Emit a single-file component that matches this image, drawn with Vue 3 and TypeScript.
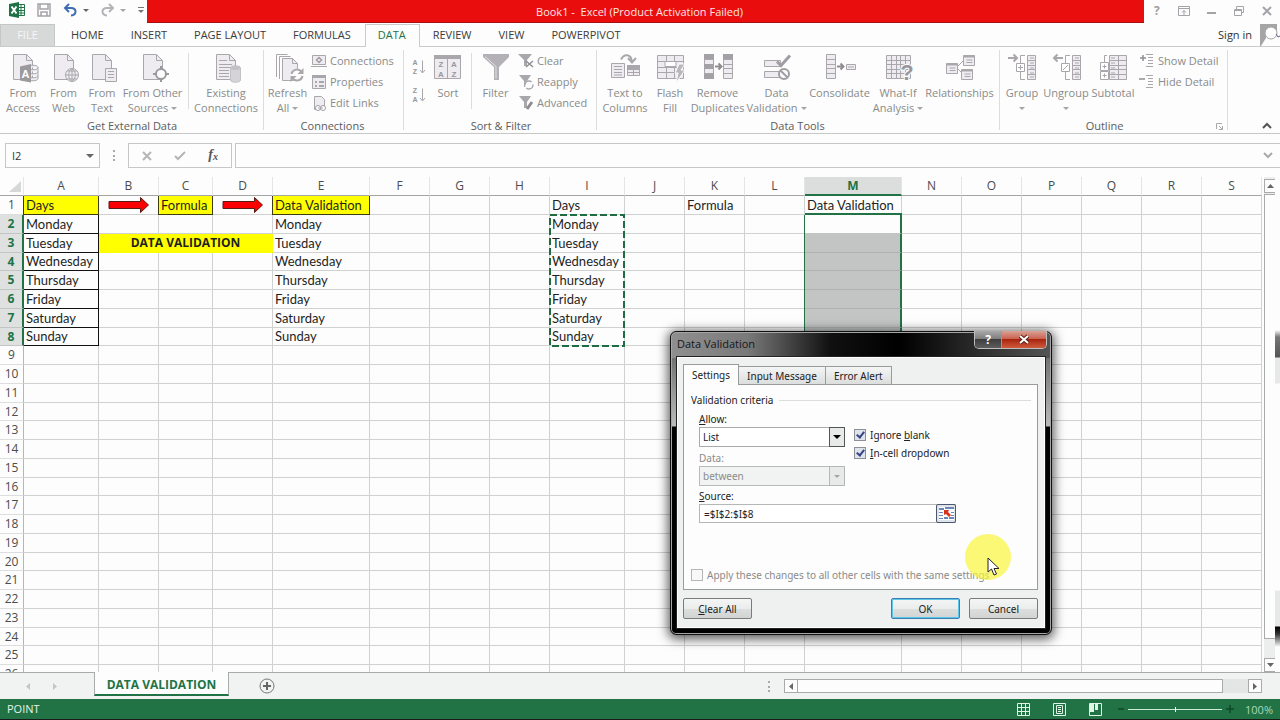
<script setup lang="ts">
import { ref } from 'vue'

interface Tool { label: string[]; icon: string; width: number; drop?: boolean; ruleBefore?: boolean }

const S = 'fill="#efecf1" stroke="#a9a7ac"'
const N = 'fill="none" stroke="#a9a7ac"'
const doc = `<path ${S} d="M5.500 1.500h13l6 6v19h-19z"/><path ${N} d="M18.500 1.500v6h6"/>`
const cells = (x: number, y: number, w: number, h: number, nx: number, ny: number) => {
  let d = `M${x} ${y}h${w}v${h}h-${w}z`
  for (let i = 1; i < nx; i++) d += `M${x + Math.round((w * i) / nx)} ${y}v${h}`
  for (let i = 1; i < ny; i++) d += `M${x} ${y + Math.round((h * i) / ny)}h${w}`
  return `<path ${S} d="${d}"/>`
}
const windowBox = (x: number, y: number) =>
  `<path ${S} d="M${x} ${y}h11v10h-11z"/><path stroke="#a9a7ac" stroke-width="2" d="M${x} ${y + 1}h11"/><path ${N} d="M${x + 3} ${y + 4.5}h6M${x + 3} ${y + 7}h6"/>`
const letter = (t: string, x: number, y: number, size: number, fill = '#98969b') =>
  `<text x="${x}" y="${y}" font-family="Liberation Sans, sans-serif" font-weight="700" font-size="${size}" fill="${fill}" text-anchor="middle">${t}</text>`

const icons: Record<string, string> = {
  access: doc + `<path fill="#efecf1" stroke="#a9a7ac" d="M20 14.500c0-3 10-3 10 0v11c0 3-10 3-10 0zM20 14.500c0 3 10 3 10 0M20 18.500c0 3 10 3 10 0M20 22.500c0 3 10 3 10 0"/><path fill="#9b999d" d="M12 13.500l11-2.500v18.500l-11-2z"/>` + letter('A', 17.5, 24.5, 11, '#fff'),
  web: doc + `<circle cx="23" cy="22" r="6.500" ${S}/><path ${N} d="M16.500 22h13M23 15.500v13M18 18h10M18 26h10M23 15.500c-4.500 4-4.500 9 0 13M23 15.500c4.500 4 4.500 9 0 13"/>`,
  text: doc + `<path ${S} d="M18.500 15.500h11v13h-11z"/><path ${N} d="M21 18.500h6M21 21.500h6M21 24.500h6"/>`,
  other: doc + `<circle cx="23" cy="21" r="5" fill="#fcfcfc" stroke="#9b999d" stroke-width="2"/><path stroke="#9b999d" stroke-width="2" d="M23 13v4M23 25v4M15 21h4M27 21h4"/>`,
  existing: doc + `<path ${N} d="M8 7.500h8M8 11.500h13M8 14.500h13M8 17.500h10M8 20.500h10M8 23.500h10"/><path fill="#d5d2d8" stroke="#c3c1c6" d="M19.500 15c0-3 10-3 10 0v12c0 3-10 3-10 0z"/><ellipse cx="24.500" cy="15" rx="5" ry="2" fill="#c3c1c6"/>`,
  refresh: `<path ${N} d="M3.500 24V1.500h11M6.500 26V3.500h11"/><path ${S} d="M9.500 5.500h10l5 5v17h-15z"/><path ${N} d="M19.500 5.500v5h5"/><circle cx="24" cy="22" r="6.500" fill="#fcfcfc"/><path fill="none" stroke="#a9a7ac" stroke-width="2" d="M18.500 21a5.500 5.500 0 0 1 10-2M29.500 23a5.500 5.500 0 0 1-10 2"/><path fill="#a9a7ac" d="M30.500 15v6h-6zM17.500 29v-6h6z"/>`,
  sort: `<path ${S} d="M1.500 2.500h26v23h-26zM14.500 5v20"/><path fill="#a9a7ac" d="M1 2h27v4H1z"/>` + letter('Z', 8, 14, 8) + letter('A', 8, 24, 8) + letter('A', 21, 14, 8) + letter('Z', 21, 24, 8),
  filter: `<path fill="#b3b1b6" d="M2 1h26v3L18 14v13h-5V14L2 4z"/><path fill="none" stroke="#e4e2e6" d="M4 3.500l11 10v12"/>`,
  columns: `<path ${S} d="M1.500 10.500h13v14h-13z"/><path ${N} d="M4 13.500h8M4 16.500h8M4 19.500h8M4 22h8"/>` + cells(17.5, 13.5, 12, 9, 2, 3) + `<path fill="#a9a7ac" d="M17 12h13v4H17z"/><path fill="none" stroke="#a9a7ac" stroke-width="2" d="M11 6.500c3-6 10-6 11 2M18 5l4 4.500L26 5"/>`,
  flash: cells(2.500, 2.500, 26, 23, 3, 4) + `<path fill="#fff" stroke="#a9a7ac" d="M10 8.500h11v5H10z"/><path fill="#b9b7bc" stroke="#fcfcfc" d="M24 11h6l-4 6h4l-9 13 2-10h-3z"/>`,
  remove: cells(1.500, 1.500, 9, 24, 1, 5) + cells(20.500, 1.500, 9, 24, 1, 5) + `<path fill="#a3a1a6" d="M1 1h10v5H1zM1 11h10v5H1zM1 21h10v5H1zM20 1h10v5H20z"/><path fill="none" stroke="#8f8d92" stroke-width="2" d="M12 13.500h6M15.500 10.500l3 3-3 3"/>`,
  validation: `<path ${S} d="M2.500 7.500h16v6h-16zM2.500 18.500h16v6h-16z"/><path fill="none" stroke="#a09ea3" stroke-width="3" d="M15 8.500l4 4 9-10"/><circle cx="22" cy="21" r="5" fill="#fcfcfc" stroke="#a09ea3" stroke-width="2"/><path stroke="#a09ea3" stroke-width="2" d="M18.500 17.500l7 7"/>`,
  consolidate: cells(1.500, 1.500, 9, 24, 1, 5) + `<path fill="none" stroke="#8f8d92" stroke-width="2" d="M12 13.500h6M15.500 10.500l3 3-3 3"/><path ${S} d="M21.500 11.500h9v5h-9zM23 14h6"/>`,
  whatif: cells(3.500, 2.500, 24, 23, 5, 5) + `<text x="24" y="27" font-family="Liberation Sans, sans-serif" font-weight="700" font-size="22" fill="#98969b" stroke="#fcfcfc" stroke-width="2" paint-order="stroke" text-anchor="middle">?</text>`,
  relations: `<path ${N} d="M12 14l7-7M12 15l6 6"/>` + windowBox(1.500, 10.500) + windowBox(18.500, 2.500) + windowBox(16.500, 16.500),
  group: cells(20.500, 2.500, 8, 24, 1, 5) + `<path ${N} d="M18 2.500h-4.500V10M13.500 19v7.500H18M23 5h4M23 10h4M23 15h4M23 20h4M23 24h4"/><path fill="#fff" stroke="#a9a7ac" d="M9.500 10.500h8v8h-8zM13.500 12v5M11 14.500h5"/><path fill="none" stroke="#a9a7ac" stroke-width="2" d="M1 5h9M6.500 1.500l3.500 3.500-3.500 3.500"/>`,
  ungroup: cells(21.500, 2.500, 8, 24, 1, 5) + `<path ${N} d="M19 2.500h-4.500V10M14.500 19v7.500H19M24 5h4M24 10h4M24 15h4M24 20h4M24 24h4"/><path fill="#fff" stroke="#a9a7ac" d="M10.500 10.500h8v8h-8zM12 17l5-5"/><path fill="none" stroke="#a9a7ac" stroke-width="2" d="M3 5h9M6.500 1.500L3 5l3.500 3.500"/>`,
  subtotal: cells(11.500, 2.500, 17, 24, 2, 5) + `<path ${N} d="M9 2.500H6.500V9M13 5h4M13 10h4M13 15h4M13 20h4M13 24h4"/><path fill="#fff" stroke="#a9a7ac" d="M2.500 9.500h8v8h-8zM2.500 18.500h8v8h-8zM6.500 11.500v4M4.500 13.500h4M6.500 20.500v4M4.500 22.500h4"/>`,
  connections: `<path ${S} d="M1.500 2.500h13v9h-13zM0 13.500h16"/><path fill="none" stroke="#a09ea3" stroke-width="1.500" d="M8 4.500l2.500 2.500L8 9.500 5.500 7z"/>`,
  properties: `<path ${S} d="M1.500 1.500h13v13h-13z"/><path fill="#a9a7ac" d="M1 1h14v3H1z"/><path ${N} stroke-width="2" d="M4 8h2M8 8h5M4 12h2M8 12h5"/>`,
  links: `<path ${S} d="M3.500 1.500h7l3 3v10h-10z"/><circle cx="7" cy="13" r="2.500" fill="#fff" stroke="#a09ea3"/><circle cx="12" cy="13" r="2.500" fill="#fff" stroke="#a09ea3"/><path ${N} d="M7 13h5"/>`,
  az: letter('A', 4, 6, 7) + letter('Z', 4, 15, 7) + `<path ${N} d="M11.500 1.500v12M9 11l2.500 3 2.500-3"/>`,
  za: letter('Z', 4, 6, 7) + letter('A', 4, 15, 7) + `<path ${N} d="M11.500 1.500v12M9 11l2.500 3 2.500-3"/>`,
  clear: `<path fill="#a9a7ac" d="M0 1h14L9 7v6H6V7z"/><path stroke="#8f8d92" stroke-width="1.500" d="M8 8l7 6M15 8l-7 6"/>`,
  reapply: `<path fill="#a9a7ac" d="M1 1h12L9 7v6H6V7z"/><circle cx="11" cy="11" r="4" fill="#fcfcfc" stroke="#a9a7ac" stroke-width="1.500" stroke-dasharray="9 3"/>`,
  advanced: `<path fill="#a9a7ac" d="M1 1h12L9 7v6H6V7z"/><path stroke="#8f8d92" stroke-width="3" d="M9 14l5-7"/>`,
  show: `<path ${N} d="M7 1.500h7M9 4.500h5M9 7.500h5M9 10.500h5M7 13.500h7"/><path stroke="#8f8d92" stroke-width="1.500" d="M1 5h6M4 2v6"/>`,
  hide: `<path ${N} d="M7 1.500h7M9 4.500h5M9 7.500h5M9 10.500h5M7 13.500h7"/><path stroke="#8f8d92" stroke-width="1.500" d="M0 5h6"/>`
}

const tabs = ['HOME', 'INSERT', 'PAGE LAYOUT', 'FORMULAS', 'DATA', 'REVIEW', 'VIEW', 'POWERPIVOT']

const external: Tool[] = [
  { label: ['From', 'Access'], icon: 'access', width: 44 },
  { label: ['From', 'Web'], icon: 'web', width: 37 },
  { label: ['From', 'Text'], icon: 'text', width: 40 },
  { label: ['From Other', 'Sources'], icon: 'other', width: 61, drop: true },
  { label: ['Existing', 'Connections'], icon: 'existing', width: 70, ruleBefore: true }
]
const dataTools: Tool[] = [
  { label: ['Text to', 'Columns'], icon: 'columns', width: 48 },
  { label: ['Flash', 'Fill'], icon: 'flash', width: 42 },
  { label: ['Remove', 'Duplicates'], icon: 'remove', width: 53 },
  { label: ['Data', 'Validation'], icon: 'validation', width: 65, drop: true },
  { label: ['Consolidate'], icon: 'consolidate', width: 61 },
  { label: ['What-If', 'Analysis'], icon: 'whatif', width: 56, drop: true },
  { label: ['Relationships'], icon: 'relations', width: 67 }
]
const outline: Tool[] = [
  { label: ['Group', ''], icon: 'group', width: 40, drop: true },
  { label: ['Ungroup', ''], icon: 'ungroup', width: 48, drop: true },
  { label: ['Subtotal'], icon: 'subtotal', width: 46 }
]

interface Group { name: string; tone: string; big: Tool[]; small: { label: string; icon: string }[] }
const groups: Group[] = [
  { name: 'Get External Data', tone: 'external', big: external, small: [] },
  {
    name: 'Connections', tone: 'links', big: [{ label: ['Refresh', 'All'], icon: 'refresh', width: 41, drop: true }],
    small: [{ label: 'Connections', icon: 'connections' }, { label: 'Properties', icon: 'properties' }, { label: 'Edit Links', icon: 'links' }]
  },
  {
    name: 'Sort & Filter', tone: 'sorting',
    big: [{ label: ['Sort'], icon: 'sort', width: 36 }, { label: ['Filter'], icon: 'filter', width: 37, ruleBefore: true }],
    small: [{ label: 'Clear', icon: 'clear' }, { label: 'Reapply', icon: 'reapply' }, { label: 'Advanced', icon: 'advanced' }]
  },
  { name: 'Data Tools', tone: 'tools', big: dataTools, small: [] },
  { name: 'Outline', tone: 'outline', big: outline, small: [{ label: 'Show Detail', icon: 'show' }, { label: 'Hide Detail', icon: 'hide' }] }
]

const letters = 'ABCDEFGHIJKLMNOPQRS'.split('')
const days = ['Monday', 'Tuesday', 'Wednesday', 'Thursday', 'Friday', 'Saturday', 'Sunday']
const rows = Array.from({ length: 26 }, (_, i) => i + 1)

function columnsOf(row: number): string[] {
  return row === 3 ? letters.filter((c) => c !== 'C' && c !== 'D') : letters
}
function valueOf(col: string, row: number): string {
  if (row === 1) {
    if (col === 'A' || col === 'I') return 'Days'
    if (col === 'C' || col === 'K') return 'Formula'
    if (col === 'E' || col === 'M') return 'Data Validation'
  }
  if (row >= 2 && row <= 8 && 'AEI'.includes(col)) return days[row - 2]
  if (row === 3 && col === 'B') return 'DATA VALIDATION'
  return ''
}
function classOf(col: string, row: number) {
  const inDays = row >= 2 && row <= 8
  return {
    heading: row === 1 && 'ACE'.includes(col),
    boxed: inDays && col === 'A',
    banner: row === 3 && col === 'B',
    picked: inDays && col === 'M',
    first: row === 2 && col === 'M',
    arrow: row === 1 && 'BD'.includes(col)
  }
}

const allow = ref('List')
const ignoreBlank = ref(true)
const inCell = ref(true)
const applyAll = ref(false)
const source = ref('=$I$2:$I$8')
const zoom = ref(50)
const formula = ref('')
const cellName = ref('I2')
</script>

<template>
  <div class="app">
    <header class="titlebar">
      <div class="quick">
        <svg class="logo" width="16" height="16" viewBox="0 0 16 16"><path fill="#fff" stroke="#217346" d="M8 2.500h7.500v11H8z" /><path stroke="#217346" d="M9 5.500h6M9 8.500h6M9 11h6M12 3v10" /><path fill="#1e7145" d="M0 2l10-2v16L0 14z" /><path stroke="#fff" stroke-width="2" d="M2.500 4.500l5 7M7.500 4.500l-5 7" /></svg>
        <button aria-label="Save"><svg width="14" height="14" viewBox="0 0 14 14"><path fill="#fff" stroke="#a5a3a8" stroke-width="1.500" d="M1 1h12v12H1zM3 1v5h8V1M4 13V9h6v4" /></svg></button>
        <button aria-label="Undo"><svg width="14" height="14" viewBox="0 0 14 14"><path fill="none" stroke="#3e6db5" stroke-width="2" d="M6 1L2 5l4 4M2 5h6c6 0 6 7 0 7.500" /></svg></button>
        <span class="caret dark"></span>
        <button class="redo" aria-label="Redo"><svg width="14" height="14" viewBox="0 0 14 14"><path fill="none" stroke="#b5b3b8" stroke-width="2" d="M8 1l4 4-4 4M12 5H6c-6 0-6 7 0 7.500" /></svg></button>
        <span class="caret"></span>
        <button class="more" aria-label="Customize"><svg width="6" height="8" viewBox="0 0 6 8"><path stroke="#777" d="M0 1.500h6" /><path fill="#777" d="M0 4h6L3 7z" /></svg></button>
      </div>
      <h1 class="title">Book1 -&nbsp; Excel (Product Activation Failed)</h1>
      <div class="winbuttons">
        <button class="help" aria-label="Help">?</button>
        <button aria-label="Ribbon options"><svg width="12" height="10" viewBox="0 0 12 10"><path fill="none" stroke="#a5a3a8" d="M.5.500h11v9H.5zM1 2.500h10M6 9V4.500M4 6.500l2-2 2 2" /></svg></button>
        <button aria-label="Minimize"><svg width="9" height="10" viewBox="0 0 9 10"><path stroke="#a5a3a8" stroke-width="2" d="M0 7h9" /></svg></button>
        <button aria-label="Restore"><svg width="10" height="10" viewBox="0 0 10 10"><path fill="none" stroke="#a5a3a8" d="M.5 3.500h7v6h-7zM2.500 3V.5h7v6H8M1 4.500h6" /></svg></button>
        <button aria-label="Close"><svg width="10" height="10" viewBox="0 0 10 10"><path stroke="#a5a3a8" stroke-width="2" d="M1 1l8 8M9 1L1 9" /></svg></button>
      </div>
    </header>

    <nav class="tabs">
      <button class="file">FILE</button>
      <button v-for="t in tabs" :key="t" class="tab" :class="{ active: t === 'DATA' }">{{ t }}</button>
      <span class="fill"></span>
      <a class="signin" href="#">Sign in</a>
      <svg class="avatar" width="20" height="22" viewBox="0 0 20 22"><path fill="#a5a5a5" d="M0 0h17v8H0z" /><path fill="#a5a5a5" d="M0 0h6v14L1 22H0z" /><circle cx="11" cy="9" r="6" fill="#fff" stroke="#a5a5a5" /><path fill="none" stroke="#6b5b85" d="M16 10l2 3 2-1" /></svg>
    </nav>

    <section class="ribbon">
      <div v-for="g in groups" :key="g.name" class="group" :class="g.tone">
        <div class="items">
          <div v-if="g.tone === 'sorting'" class="orders">
            <button aria-label="Sort A to Z"><svg width="15" height="16" viewBox="0 0 15 16" v-html="icons.az"></svg></button>
            <button aria-label="Sort Z to A"><svg width="15" height="16" viewBox="0 0 15 16" v-html="icons.za"></svg></button>
          </div>
          <template v-for="b in g.big" :key="b.icon">
            <span v-if="b.ruleBefore" class="rule"></span>
            <button class="big" :style="{ width: b.width + 'px' }">
              <svg width="30" height="30" viewBox="0 0 30 30" v-html="icons[b.icon]"></svg>
              <span v-for="(line, i) in b.label" :key="i" class="line">{{ line }}<i v-if="b.drop && i === 1" class="caret" :class="{ alone: !line }"></i></span>
            </button>
          </template>
          <div v-if="g.small.length" class="smalls">
            <button v-for="s in g.small" :key="s.label" class="small">
              <svg width="16" height="16" viewBox="0 0 16 16" v-html="icons[s.icon]"></svg>{{ s.label }}
            </button>
          </div>
        </div>
        <div class="name">{{ g.name }}
          <svg v-if="g.tone === 'outline'" class="launcher" width="7" height="7" viewBox="0 0 7 7"><path fill="none" stroke="#aaa" d="M.5 6V.5H6M3 3l3.500 3.500M6.500 3v3.500H3" /></svg>
        </div>
      </div>
      <button class="collapse" aria-label="Collapse ribbon"><svg width="8" height="6" viewBox="0 0 8 6"><path fill="none" stroke="#555" stroke-width="2" d="M0 5l4-4 4 4" /></svg></button>
    </section>

    <section class="formulabar">
      <div class="namebox"><input v-model="cellName" aria-label="Name box" /><span class="caret dark"></span></div>
      <span class="grip"></span>
      <div class="fxbox">
        <button aria-label="Cancel entry"><svg width="10" height="10" viewBox="0 0 10 10"><path stroke="#b5b5b5" stroke-width="2" d="M1 1l8 8M9 1L1 9" /></svg></button>
        <button aria-label="Enter"><svg width="12" height="10" viewBox="0 0 12 10"><path fill="none" stroke="#b5b5b5" stroke-width="2" d="M1 5l3 3 7-7" /></svg></button>
        <button class="fx" aria-label="Insert function"><i>f</i><sub>x</sub></button>
      </div>
      <input v-model="formula" class="formula" aria-label="Formula bar" />
      <svg class="expand" width="8" height="6" viewBox="0 0 8 6"><path fill="none" stroke="#aaa" stroke-width="2" d="M0 1l4 4 4-4" /></svg>
    </section>

    <main class="sheet">
      <div class="gridwrap">
        <table class="grid">
          <colgroup><col class="c-head" /><col v-for="c in letters" :key="c" :class="'c-' + c" /></colgroup>
          <thead>
            <tr>
              <th class="corner"><svg width="12" height="11" viewBox="0 0 12 11"><path fill="#d6d8d7" d="M12 0v11H0z" /></svg></th>
              <th v-for="c in letters" :key="c" scope="col" :class="{ sel: c === 'M' }">{{ c }}</th>
            </tr>
          </thead>
          <tbody>
            <tr v-for="r in rows" :key="r">
              <th scope="row" :class="{ sel: r > 1 && r < 9 }">{{ r }}</th>
              <td v-for="c in columnsOf(r)" :key="c" :class="classOf(c, r)" :colspan="r === 3 && c === 'B' ? 3 : 1">
                <svg v-if="r === 1 && 'BD'.includes(c)" width="42" height="16" viewBox="0 0 42 16"><path fill="#fb0000" stroke="#5c1a14" d="M1 4.500h31.500v-4L40.500 8l-8 7.500v-4H1z" /></svg>
                <template v-else>{{ valueOf(c, r) }}</template>
                <svg v-if="c === 'I' && r === 2" class="ants" aria-hidden="true"><rect x="1" y="1" width="74" height="131" /></svg>
              </td>
            </tr>
          </tbody>
        </table>
      </div>
      <div class="vscroll">
        <button aria-label="Scroll up"><svg width="7" height="4" viewBox="0 0 7 4"><path fill="#666" d="M0 4l3.500-4L7 4z" /></svg></button>
        <div class="vthumb"></div>
        <div class="vtrack"></div>
        <button aria-label="Scroll down"><svg width="7" height="4" viewBox="0 0 7 4"><path fill="#666" d="M0 0l3.500 4L7 0z" /></svg></button>
      </div>
      <div class="edge"></div>
    </main>

    <section class="sheettabs">
      <button class="nav" aria-label="Previous sheet"><svg width="4" height="7" viewBox="0 0 4 7"><path fill="#c4c6c5" d="M4 0v7L0 3.500z" /></svg></button>
      <button class="nav" aria-label="Next sheet"><svg width="4" height="7" viewBox="0 0 4 7"><path fill="#c4c6c5" d="M0 0v7l4-3.500z" /></svg></button>
      <button class="sheettab">DATA VALIDATION</button>
      <button class="add" aria-label="New sheet"><svg width="16" height="16" viewBox="0 0 16 16"><circle cx="8" cy="8" r="7" fill="none" stroke="#777" /><path stroke="#666" stroke-width="2" d="M4 8h8M8 4v8" /></svg></button>
      <span class="fill"></span>
      <span class="grip"></span>
      <div class="hscroll">
        <button aria-label="Scroll left"><svg width="4" height="7" viewBox="0 0 4 7"><path fill="#666" d="M4 0v7L0 3.500z" /></svg></button>
        <div class="hthumb"></div>
        <div class="htrack"></div>
        <button aria-label="Scroll right"><svg width="4" height="7" viewBox="0 0 4 7"><path fill="#666" d="M0 0v7l4-3.500z" /></svg></button>
      </div>
    </section>

    <footer class="status">
      <span class="mode">POINT</span>
      <span class="fill"></span>
      <button aria-label="Normal view"><svg width="13" height="13" viewBox="0 0 13 13"><path fill="none" stroke="#dff5e6" d="M.5.500h12v12H.5zM4.500 0v13M8.500 0v13M0 4.500h13M0 8.500h13" /></svg></button>
      <button aria-label="Page layout"><svg width="13" height="13" viewBox="0 0 13 13"><path fill="none" stroke="#dff5e6" d="M.5.500h12v12H.5zM3.500 2.500h6v8h-6zM5 4.500h3M5 6.500h3M5 8.500h3" /></svg></button>
      <button aria-label="Page break preview"><svg width="13" height="13" viewBox="0 0 13 13"><path fill="none" stroke="#dff5e6" d="M.5.500h12v12H.5z" /><path fill="#dff5e6" d="M1 1h4v8H1zM6 1h3v6H6z" /></svg></button>
      <button class="step" aria-label="Zoom out"><svg width="6" height="8" viewBox="0 0 6 8"><path stroke="#0e4527" stroke-width="1.500" d="M0 4h6" /></svg></button>
      <input v-model="zoom" class="zoom" type="range" min="0" max="100" aria-label="Zoom" />
      <button class="step" aria-label="Zoom in"><svg width="8" height="8" viewBox="0 0 8 8"><path stroke="#0e4527" stroke-width="1.500" d="M0 4h8M4 0v8" /></svg></button>
      <span class="percent">100%</span>
    </footer>

    <div class="dialog" role="dialog" aria-label="Data Validation">
      <div class="caption">
        <span class="captext">Data Validation</span>
        <div class="capbuttons">
          <button class="caphelp" aria-label="Help">?</button>
          <button class="capclose" aria-label="Close"><svg width="10" height="9" viewBox="0 0 10 9"><path stroke="#5b2018" stroke-width="4" d="M1 1l8 7M9 1L1 8" /><path stroke="#fff" stroke-width="2" d="M1 1l8 7M9 1L1 8" /></svg></button>
        </div>
      </div>
      <form class="body" @submit.prevent>
        <div class="dtabs">
          <button type="button" class="dtab on">Settings</button>
          <button type="button" class="dtab">Input Message</button>
          <button type="button" class="dtab">Error Alert</button>
        </div>
        <div class="panel">
          <div class="legend">Validation criteria<span class="hr"></span></div>
          <div class="fields">
            <div class="left">
              <label for="allow"><u>A</u>llow:</label>
              <div class="combo"><select id="allow" v-model="allow"><option>List</option></select><span class="drop"><i class="caret black"></i></span></div>
              <label for="data" class="muted">Data:</label>
              <div class="combo off"><select id="data" disabled><option>between</option></select><span class="drop"><i class="caret"></i></span></div>
            </div>
            <div class="checks">
              <label class="check"><input v-model="ignoreBlank" type="checkbox" /><span>Ignore <u>b</u>lank</span></label>
              <label class="check"><input v-model="inCell" type="checkbox" /><span><u>I</u>n-cell dropdown</span></label>
            </div>
          </div>
          <label for="source" class="srclabel"><u>S</u>ource:</label>
          <div class="source">
            <input id="source" v-model="source" type="text" />
            <button type="button" aria-label="Collapse dialog"><svg width="15" height="13" viewBox="0 0 15 13"><path fill="#fff" d="M0 0h15v13H0z" /><path fill="#6d85bd" d="M0 1h5v2H0zM6 0h9v2H6zM0 5h4v1H0zM0 8h4v1H0zM0 11h4v1H0zM5 10h4v2H5zM10 10h5v2h-5zM12 5h3v1h-3zM12 8h3v1h-3z" /><path fill="#d8341c" d="M5 3h5L9 5l3 3-2 2-3-3-2 1z" /></svg></button>
          </div>
          <label class="check muted apply"><input v-model="applyAll" type="checkbox" disabled /><span>Apply these changes to all other cells with the same settings</span></label>
        </div>
        <div class="actions">
          <button type="button" class="btn"><u>C</u>lear All</button>
          <span class="fill"></span>
          <button type="button" class="btn main">OK</button>
          <button type="button" class="btn">Cancel</button>
        </div>
      </form>
    </div>

    <div class="pointer" aria-hidden="true">
      <svg width="13" height="19" viewBox="0 0 13 19"><path fill="#fff" stroke="#222" d="M1 1v14l3.500-3 2.500 6 2.500-1-2.500-5.500h5z" /></svg>
    </div>
  </div>
</template>

<style>
html, body { margin: 0; overflow: hidden; background: #fcfdfc; }
</style>

<style scoped>
.app { position: relative; display: flex; flex-direction: column; height: 100vh; overflow: hidden; background: #fcfdfc; color: #333; font: 11px/15px "Open Sans", "Noto Sans", sans-serif; }
.app * { box-sizing: border-box; }
button { margin: 0; padding: 0; border: 0; background: none; color: inherit; font: inherit; white-space: nowrap; }
input, select { font: inherit; color: inherit; margin: 0; outline: 0; }
svg { display: block; overflow: visible; flex: none; }
.fill { flex: 1; }
.caret { display: inline-block; width: 0; height: 0; border: 3px solid transparent; border-bottom: 0; border-top-color: #a5a5a5; }
.caret.dark { border-top-color: #666; border-left-width: 4px; border-right-width: 4px; border-top-width: 4px; }
.caret.black { border-top-color: #000; border-left-width: 4px; border-right-width: 4px; border-top-width: 4px; }

.titlebar { display: flex; height: 24px; flex: none; }
.quick { display: flex; align-items: center; width: 147px; padding: 0 2px 4px 9px; flex: none; }
.quick button { margin-left: 12px; }
.quick .caret { margin-left: 5px; }
.quick .caret.dark { border-width: 3px 3px 0; margin-left: 6px; }
.quick .more { margin-left: 12px; }
.title { flex: 1; margin: 0; height: 23px; padding-right: 12px; background: #ea0d0e; border-bottom: 1px solid #a80d10; color: #fbe6e4; font: inherit; line-height: 24px; text-align: center; }
.winbuttons { display: flex; justify-content: space-between; width: 136px; padding: 0 8px 3px 10px; align-items: center; flex: none; }
.help { color: #a0a0a0; font-weight: 700; font-size: 12px; }

.tabs { display: flex; align-items: stretch; height: 23px; border-bottom: 1px solid #c9cbca; flex: none; }
.file { width: 55px; margin-right: 3px; padding-bottom: 2px; background: #d7d9d8; border: 1px solid #c5c7c6; border-bottom: 0; color: #f6f6f6; }
.tab { height: 23px; padding: 0 13px 4px 12px; border: 1px solid transparent; border-bottom: 0; color: #3b3b3b; }
.tab.active { color: #217346; border-color: #c9cbca; background: #fcfdfc; }
.signin { color: #333; text-decoration: none; line-height: 21px; margin-right: 8px; }

.ribbon { display: flex; height: 87px; padding-top: 3px; border-bottom: 1px solid #c6c8c7; flex: none; color: #8b8b8b; position: relative; }
.group { height: 80px; border-right: 1px solid #dcdedd; flex: none; }
.items { display: flex; height: 68px; }
.name { position: relative; height: 15px; text-align: center; color: #5c5c5c; line-height: 15px; }
.external { width: 264px; padding-left: 1px; }
.links { width: 140px; padding-left: 3px; }
.sorting { width: 193px; padding-left: 7px; }
.tools { width: 403px; padding-left: 4px; }
.outline { width: 228px; padding-left: 2px; }
.links .name, .sorting .name, .tools .name { padding-right: 5px; }
.outline .name { padding-right: 20px; }
.big { display: flex; flex-direction: column; align-items: center; padding-top: 3px; flex: none; }
.big svg { margin-bottom: 2px; }
.line { height: 15px; }
.line .caret { margin-left: 3px; vertical-align: 2px; }
.line .caret.alone { margin-left: 0; }
.rule { width: 1px; height: 56px; background: #dcdedd; margin: 3px 5px; }
.external .rule { margin: 3px 2px 3px 5px; }
.smalls { padding-left: 3px; }
.sorting .smalls { padding-left: 4px; }
.small { display: flex; align-items: center; height: 21px; gap: 3px; }
.orders { display: flex; flex-direction: column; gap: 12px; padding-top: 9px; width: 19px; }
.launcher { position: absolute; right: 4px; top: 5px; }
.collapse { margin: auto 9px 4px auto; }

.formulabar { display: flex; height: 25px; margin-top: 9px; flex: none; position: relative; }
.namebox { display: flex; align-items: center; width: 95px; margin-left: 5px; border: 1px solid #c6c8c7; padding-right: 5px; }
.namebox input { width: 80px; flex: 1; border: 0; padding: 0 6px; background: none; }
.grip { width: 2px; height: 11px; border-left: 2px dotted #a9a9a9; align-self: center; }
.formulabar .grip { margin: 0 13px 0 13px; }
.fxbox { display: flex; align-items: center; justify-content: space-around; width: 104px; border: 1px solid #c6c8c7; padding: 0 2px; }
.fx { color: #555; font-family: "Liberation Serif", serif; font-size: 14px; font-weight: 700; }
.fx sub { font-size: 10px; font-style: italic; vertical-align: -1px; }
.formula { flex: 1; margin-left: 3px; border: 1px solid #c6c8c7; border-right: 0; background: none; padding: 0 24px 0 5px; }
.expand { position: absolute; right: 8px; top: 9px; }

.sheet { display: flex; flex: 1; min-height: 0; overflow: hidden; padding-top: 9px; position: relative; }
.gridwrap { overflow: hidden; width: 1262px; flex: none; }
.grid { table-layout: fixed; border-collapse: separate; border-spacing: 0; width: 1262px; font-family: Lato, "Open Sans", sans-serif; font-size: 13px; line-height: 18px; color: #1f1f1f; }
.grid th { font: 12px/18px "Open Sans", sans-serif; color: #4c4c4c; padding: 0; }
.grid tr { height: 19px; }
.grid tbody tr:nth-child(4n) { height: 18px; }
.grid tbody tr:nth-child(4n) > * { line-height: 17px; }
.grid thead th { border-right: 1px solid #e4e6e5; border-bottom: 1px solid #a4a6a5; }
.grid thead th.sel { background: #dcdedd; color: #217346; font-weight: 700; border-bottom: 2px solid #217346; line-height: 17px; }
.corner svg { margin-left: 9px; }
.grid tbody th { border-right: 1px solid #b5b7b6; border-bottom: 1px solid #dcdedd; }
.grid tbody th.sel { background: #dfe1e0; color: #217346; font-weight: 700; border-right: 2px solid #217346; border-bottom-color: #c3c5c4; }
.grid td { padding: 0 0 0 2px; border-right: 1px solid #d0d2d1; border-bottom: 1px solid #d0d2d1; white-space: nowrap; overflow: visible; position: relative; }
.grid td.heading { background: #ff0; border-color: #3d3d10; box-shadow: -1px 0 #3d3d10; }
.grid td.boxed { border-color: #111; }
.grid td.banner { background: #ff0; border-color: #ff0; text-align: center; font-family: "Open Sans", sans-serif; font-weight: 700; font-size: 12px; padding: 0; }
.grid td.picked { background: #c3c5c4; border-color: #b0b2b1; border-right: 2px solid #217346; box-shadow: -1px 0 #217346; }
.grid td.first { background: #fcfdfc; border-bottom-color: #c3c5c4; box-shadow: -1px 0 #217346, 0 -2px #217346; }
.grid td.arrow svg { margin-left: 7px; }
.ants { position: absolute; left: -1px; top: -1px; width: 76px; height: 133px; z-index: 1; }
.ants rect { fill: none; stroke: #1f6b42; stroke-width: 2; stroke-dasharray: 7 3; }
.c-head { width: 24px; } .c-A { width: 75px; } .c-C { width: 54px; } .c-E, .c-M { width: 97px; } .c-I { width: 75px; }
.c-B, .c-D, .c-F, .c-G, .c-H, .c-J, .c-K, .c-L, .c-N, .c-O, .c-P, .c-Q, .c-R, .c-S { width: 60px; }
.vscroll { display: flex; flex-direction: column; width: 11px; margin-left: 2px; padding-top: 2px; background: #eceeed; }
.vscroll button { height: 14px; display: flex; align-items: center; justify-content: center; border: 1px solid #a9abaa; border-right: 0; background: #fcfdfc; }
.vthumb { flex: 1; margin-top: 1px; border: 1px solid #a9abaa; border-right: 0; background: #fcfdfc; }
.vtrack { height: 19px; }
.edge { flex: 1; background: linear-gradient(#fcfdfc 153px, #777 160px, #555 180px, #e7e9e8 181px, #e7e9e8 206px, #fcfdfc 207px, #fcfdfc 413px, #e7e9e8 414px, #e7e9e8 449px, #000 450px, #333 457px, #fcfdfc 470px); }

.sheettabs { display: flex; align-items: center; height: 27px; border-top: 1px solid #a9abaa; background: #f1f3f2; flex: none; }
.nav { width: 27px; display: flex; justify-content: center; }
.nav:first-child { margin-left: 14px; }
.sheettab { align-self: flex-start; width: 135px; height: 24px; margin: -1px 0 0 26px; padding-top: 2px; background: #fcfdfc; border: 1px solid #a9abaa; border-top: 0; border-bottom: 2px solid #217346; color: #217346; font-weight: 700; font-size: 12px; }
.add { margin-left: 30px; }
.hscroll { display: flex; width: 478px; height: 14px; margin: 0 18px 0 14px; background: #e4e6e5; }
.hscroll button { width: 14px; display: flex; align-items: center; justify-content: center; border: 1px solid #a9abaa; background: #fcfdfc; }
.hthumb { flex: 1; border: 1px solid #a9abaa; border-left: 0; background: #fcfdfc; }
.htrack { width: 25px; }

.status { display: flex; align-items: center; height: 21px; padding: 0 7px; background: #217346; border-bottom: 1px solid #1b1b1b; color: #e3f3e8; flex: none; }
.mode { line-height: 18px; }
.status button { margin-right: 23px; }
.status button.step { margin-right: 4px; margin-left: -7px; }
.status .zoom + button.step { margin: 0 11px 0 4px; }
.zoom { appearance: none; width: 94px; height: 9px; background: linear-gradient(#cfe8d6, #cfe8d6) center / 100% 1px no-repeat; }
.zoom::-webkit-slider-thumb { appearance: none; width: 1px; height: 5px; background: #fff; }
.percent { color: #a9d8b8; }

.dialog { position: absolute; left: 670px; top: 331px; width: 382px; padding: 0 6px 6px; border: 1px solid #111; border-radius: 6px; font-family: "Noto Sans", "Open Sans", sans-serif; font-size: 10px; line-height: 14px; color: #222; background: linear-gradient(90deg, #8f8f8f 0, #7a7a7a 20%, #101010 42%, #000 60%, #2a2a2a 80%, #555 100%) 0 0 / 100% 26px no-repeat, linear-gradient(#555 0, #bbb 94px, #000 95px, #000 100%); box-shadow: inset 0 0 0 1px #a5a5a5, 0 2px 11px 2px rgba(0, 0, 0, .65); }
.caption { display: flex; height: 25px; align-items: flex-start; justify-content: space-between; }
.captext { font-family: "Open Sans", sans-serif; font-size: 11px; line-height: 24px; color: #161616; }
.capbuttons { display: flex; height: 18px; margin-top: -1px; border: 1px solid #bdbdbd; border-top: 0; border-radius: 0 0 5px 5px; overflow: hidden; margin-right: -2px; }
.caphelp { width: 27px; background: linear-gradient(#a9a9a9, #7c7c7c 48%, #3d3d3d 50%, #5e5e5e); color: #fff; font-weight: 700; font-size: 12px; border-right: 1px solid #999; }
.capclose { width: 44px; display: flex; align-items: center; justify-content: center; background: linear-gradient(#dba196, #c8604c 48%, #a92510 50%, #cf5b3c); }
.body { margin: 0; border: 1px solid #fff; outline: 1px solid #222; background: #eff1f0; padding: 6px 6px 8px 5px; }
.dtabs { display: flex; align-items: flex-end; height: 20px; }
.dtab { height: 18px; padding: 0 6px; border: 1px solid #9a9c9b; border-left-width: 0; border-bottom: 0; background: linear-gradient(#f4f6f5, #dcdedd); }
.dtab + .dtab { padding: 0 8px; }
.dtab.on { height: 21px; margin-bottom: -1px; padding: 0 8px; border-left-width: 1px; background: #fcfdfc; z-index: 1; }
.panel { height: 206px; border: 1px solid #9a9c9b; background: #fcfdfc; padding: 8px 6px 0 7px; }
.legend { display: flex; align-items: center; gap: 6px; height: 14px; }
.hr { flex: 1; height: 1px; background: #dcdedd; }
.fields { display: flex; padding: 5px 0 0 8px; gap: 9px; }
.left { width: 146px; }
.left label { display: block; height: 15px; }
.combo { display: flex; height: 20px; margin-bottom: 4px; border: 1px solid #a9abaa; background: #fff; }
.combo select { appearance: none; flex: 1; border: 0; background: none; padding: 0 3px; opacity: 1; }
.drop { width: 16px; display: flex; align-items: center; justify-content: center; border: 1px solid #555; background: #e8eae9; margin: -1px; }
.off { background: #f1f3f2; color: #8b8b8b; border-color: #b9bbba; margin-bottom: 3px; }
.off .drop { border-color: #b5b7b6; }
.muted { color: #8b8b8b; }
.checks { padding-top: 14px; }
.check { display: flex; align-items: center; height: 18px; gap: 4px; }
.check input { appearance: none; width: 12px; height: 12px; border: 1px solid #8e9095; background: #e4e7ef; flex: none; }
.check input:checked { background: #dfe3ee; }
.check input:checked::after { content: ""; display: block; width: 3px; height: 6px; margin: 0 0 0 3px; border: solid #34467f; border-width: 0 2px 2px 0; transform: rotate(38deg); }
.check input:disabled { background: #f7f8f7; border-color: #b5b7b6; }
.srclabel { display: block; margin-left: 8px; height: 15px; }
.source { display: flex; width: 257px; height: 19px; margin-left: 8px; border: 1px solid #b5b7b6; background: #fff; }
.source input { flex: 1; width: 100px; border: 0; background: none; padding: 0 4px; }
.source button { display: flex; align-items: center; justify-content: center; width: 20px; margin: -1px; border: 1px solid #4a5870; border-radius: 2px; background: #dfe3ea; }
.apply { margin-top: 43px; }
.actions { display: flex; gap: 9px; padding-top: 8px; }
.btn { width: 69px; height: 21px; border: 1px solid #7a7c7b; border-radius: 2px; background: linear-gradient(#f4f6f5, #ebedec 50%, #dddfde 51%, #d2d4d3); }
.btn.main { border-color: #3c7fb1; box-shadow: inset 0 0 0 1px #5cc5ea; }

.pointer { position: absolute; left: 965px; top: 534px; width: 46px; height: 46px; border-radius: 50%; background: rgba(250, 245, 60, .7); }
.pointer svg { margin: 23px 0 0 22px; }
</style>
